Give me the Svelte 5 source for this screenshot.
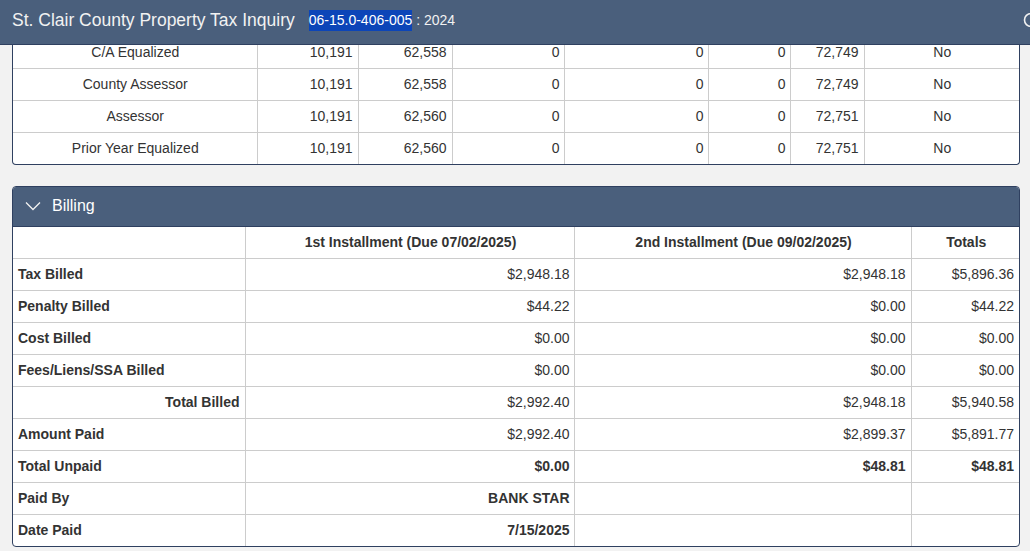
<script>
  const assessments = [
    ['C/A Equalized', '10,191', '62,558', '0', '0', '0', '72,749', 'No'],
    ['County Assessor', '10,191', '62,558', '0', '0', '0', '72,749', 'No'],
    ['Assessor', '10,191', '62,560', '0', '0', '0', '72,751', 'No'],
    ['Prior Year Equalized', '10,191', '62,560', '0', '0', '0', '72,751', 'No']
  ];

  const billing = [
    { label: 'Tax Billed', first: '$2,948.18', second: '$2,948.18', total: '$5,896.36' },
    { label: 'Penalty Billed', first: '$44.22', second: '$0.00', total: '$44.22' },
    { label: 'Cost Billed', first: '$0.00', second: '$0.00', total: '$0.00' },
    { label: 'Fees/Liens/SSA Billed', first: '$0.00', second: '$0.00', total: '$0.00' },
    { label: 'Total Billed', first: '$2,992.40', second: '$2,948.18', total: '$5,940.58', right: true },
    { label: 'Amount Paid', first: '$2,992.40', second: '$2,899.37', total: '$5,891.77' },
    { label: 'Total Unpaid', first: '$0.00', second: '$48.81', total: '$48.81', strong: true },
    { label: 'Paid By', first: 'BANK STAR', second: '', total: '', strong: true },
    { label: 'Date Paid', first: '7/15/2025', second: '', total: '', strong: true }
  ];
</script>

<header class="topbar">
  <span class="app-title">St. Clair County Property Tax Inquiry</span>
  <span class="parcel"><span class="parcel-id">06-15.0-406-005</span> : 2024</span>
  <svg class="search" viewBox="0 0 20 20"><circle cx="8" cy="8" r="6.5" /><path d="M13 13l6 6" /></svg>
</header>

<main class="page">
  <section class="panel first">
    <table class="values">
      <colgroup>
        <col style="width:244px" /><col style="width:101px" /><col style="width:94px" /><col style="width:112px" />
        <col style="width:144px" /><col style="width:82px" /><col style="width:74px" /><col />
      </colgroup>
      <tbody>
        {#each assessments as row}
          <tr>
            <td class="center">{row[0]}</td>
            {#each row.slice(1, 7) as value, i}
              <td class="right" class:zero={i > 1 && i < 5}>{value}</td>
            {/each}
            <td class="center">{row[7]}</td>
          </tr>
        {/each}
      </tbody>
    </table>
  </section>

  <section class="panel billing">
    <div class="panel-head">
      <svg class="chevron" viewBox="0 0 16 10"><path d="M1 1.5l7 7 7-7" /></svg>
      <span>Billing</span>
    </div>
    <table class="bills">
      <colgroup>
        <col style="width:232px" /><col style="width:329px" /><col style="width:337px" /><col />
      </colgroup>
      <thead>
        <tr>
          <th></th>
          <th>1st Installment (Due 07/02/2025)</th>
          <th>2nd Installment (Due 09/02/2025)</th>
          <th>Totals</th>
        </tr>
      </thead>
      <tbody>
        {#each billing as row}
          <tr class:strong={row.strong}>
            <td class="label" class:right={row.right}>{row.label}</td>
            <td class="right">{row.first}</td>
            <td class="right">{row.second}</td>
            <td class="right">{row.total}</td>
          </tr>
        {/each}
      </tbody>
    </table>
  </section>
</main>

<style>
  :global(body) {
    margin: 0;
    height: 551px;
    overflow: hidden;
    background: #f2f2f2;
    font-family: 'Liberation Sans', Arial, sans-serif;
    font-size: 14px;
    color: #333;
  }

  .topbar {
    position: fixed;
    top: 0;
    left: 0;
    right: 0;
    z-index: 2;
    height: 41px;
    display: flex;
    align-items: center;
    padding: 0 12px 3px;
    background: #4a5f7c;
    border-bottom: 1px solid #2f4060;
    color: #f2f2f2;
  }

  .app-title {
    font-size: 17.5px;
  }

  .parcel {
    margin-left: 14px;
    font-size: 14px;
  }

  .parcel-id {
    display: inline-block;
    line-height: 21px;
    background: #0c45b8;
    color: #fff;
  }

  .search {
    position: absolute;
    left: 1023px;
    top: 12px;
    width: 20px;
    height: 20px;
    fill: none;
    stroke: #f2f2f2;
    stroke-width: 1.6;
  }

  .page {
    padding: 36px 10px 0 12px;
  }

  .panel {
    background: #fff;
    border: 1px solid #2f4060;
    border-radius: 4px;
    overflow: hidden;
  }

  .first {
    border-top: 0;
    border-top-left-radius: 0;
    border-top-right-radius: 0;
  }

  .billing {
    margin-top: 21px;
  }

  .panel-head {
    height: 40px;
    box-sizing: border-box;
    display: flex;
    align-items: center;
    gap: 11px;
    padding: 0 0 2px 12px;
    background: #4a5f7c;
    border-bottom: 1px solid #2f4060;
    color: #fff;
    font-size: 16px;
  }

  .chevron {
    width: 16px;
    height: 10px;
    fill: none;
    stroke: #f2f2f2;
    stroke-width: 1.3;
  }

  table {
    width: 100%;
    table-layout: fixed;
    border-collapse: collapse;
  }

  td,
  th {
    height: 29px;
    padding: 0 5px 2px;
    box-sizing: content-box;
    border: 1px solid #ccc;
    text-align: left;
    font-weight: normal;
  }

  tr > :first-child {
    border-left: 0;
  }

  tr > :last-child {
    border-right: 0;
  }

  tbody tr:last-child td {
    border-bottom: 0;
  }

  thead tr th {
    border-top: 0;
    padding-left: 6px;
    padding-right: 4px;
    text-align: center;
    font-weight: bold;
  }

  td.center {
    padding-left: 6px;
    text-align: center;
  }

  td.right {
    text-align: right;
  }

  .bills td.right:nth-child(2),
  td.zero {
    padding-right: 4px;
  }

  .label,
  .strong td {
    font-weight: bold;
  }
</style>
